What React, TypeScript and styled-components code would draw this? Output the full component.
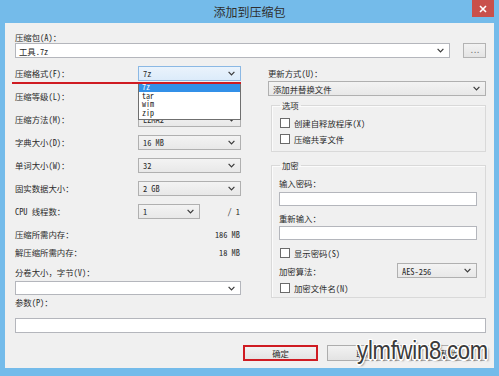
import React from 'react'
import styled, { createGlobalStyle } from 'styled-components'

const GlobalStyle = createGlobalStyle`
  html, body {
    margin: 0;
    padding: 0;
    background: #74bbea;
  }
  body {
    width: 499px;
    height: 376px;
    overflow: hidden;
  }
`

const UI_FONT = `"Noto Sans Mono CJK SC", "Liberation Mono", "Noto Sans CJK SC", monospace`

const Window = styled.div`
  position: relative;
  width: 499px;
  height: 376px;
  box-sizing: border-box;
  padding: 0 5px 8px 5px;
  background: #74bbea;
  display: flex;
  flex-direction: column;
`

const TitleBar = styled.div`
  height: 23px;
  display: grid;
  grid-template-columns: 1fr auto 1fr;
  align-items: start;
`

const Title = styled.div`
  grid-column: 2;
  line-height: 24px;
  font-family: "Noto Sans CJK SC", sans-serif;
  font-size: 12px;
  color: #2f2f2f;
`

const CloseButton = styled.div`
  grid-column: 3;
  justify-self: end;
  width: 22px;
  height: 17px;
  background: #c9504b;
  display: flex;
  align-items: center;
  justify-content: center;
`

const Client = styled.div`
  flex: 1;
  min-width: 0;
  background: #f0f0f0;
  padding: 9px 8px 7px 10px;
  display: flex;
  flex-direction: column;
  font-family: ${UI_FONT};
  font-size: 8.4px;
  color: #2b2b2b;
`

const Label = styled.div<{ $mt?: number }>`
  height: 10px;
  line-height: 10px;
  margin-top: ${(p) => p.$mt ?? 0}px;
  white-space: nowrap;
`

const ArchiveRow = styled.div`
  display: flex;
  gap: 13px;
  height: 15px;
  margin-top: 1px;
`

const Field = styled.div<{ $h?: number; $mt?: number; $grow?: boolean }>`
  position: relative;
  box-sizing: border-box;
  flex: ${(p) => (p.$grow ? '1 1 auto' : 'none')};
  height: ${(p) => p.$h ?? 15}px;
  margin-top: ${(p) => p.$mt ?? 0}px;
  background: #fff;
  border: 1px solid #b4b6bc;
  display: flex;
  align-items: center;
  justify-content: space-between;
  padding: 0 5px 0 3px;
  white-space: nowrap;
`

const Select = styled.div<{ $focused?: boolean; $width?: number }>`
  position: relative;
  box-sizing: border-box;
  flex: none;
  height: 15px;
  ${(p) => (p.$width ? `width: ${p.$width}px;` : '')}
  border: 1px solid ${(p) => (p.$focused ? '#8bb8e4' : '#b0b0b0')};
  background: ${(p) =>
    p.$focused ? 'linear-gradient(#eaf3fc, #dcebfa)' : 'linear-gradient(#f3f3f3, #e8e8e8)'};
  display: flex;
  align-items: center;
  justify-content: space-between;
  padding: 0 5px 0 4px;
  white-space: nowrap;
`

const DotsButton = styled.div`
  box-sizing: border-box;
  width: 23px;
  height: 15px;
  border: 1px solid #b3b3b3;
  background: linear-gradient(#f2f2f2, #e4e4e4);
  color: #777;
  text-align: center;
  line-height: 11px;
  letter-spacing: -1px;
`

const Columns = styled.div`
  display: grid;
  grid-template-columns: 226px 218px;
  column-gap: 27px;
  margin-top: 8px;
  align-items: start;
`

const Column = styled.div`
  display: flex;
  flex-direction: column;
`

const SettingsList = styled.div`
  display: flex;
  flex-direction: column;
  gap: 8px;
`

const SettingRow = styled.div`
  position: relative;
  display: grid;
  grid-template-columns: 123px 1fr auto;
  align-items: center;
  height: 15px;
  line-height: 15px;
`

const Trailing = styled.span`
  padding-right: 1px;
`

const StatRow = styled.div<{ $mt: number }>`
  display: flex;
  justify-content: space-between;
  height: 12px;
  line-height: 12px;
  margin-top: ${(p) => p.$mt}px;
  padding-right: 1px;
`

const Annotation = styled.div`
  position: absolute;
  left: -3px;
  right: 0;
  top: 16px;
  height: 2px;
  background: #cf1b22;
  z-index: 3;
`

const DropList = styled.div`
  position: absolute;
  top: 16px;
  left: -1px;
  right: -1px;
  z-index: 2;
  background: #fff;
  border: 1px solid #6f6f6f;
  border-top: none;
  padding-bottom: 1px;
  display: flex;
  flex-direction: column;
`

const DropItem = styled.div<{ $active?: boolean }>`
  flex: none;
  height: 8.7px;
  line-height: 8.7px;
  font-size: 8px;
  padding-left: 3px;
  background: ${(p) => (p.$active ? '#3390e8' : 'transparent')};
  color: ${(p) => (p.$active ? '#fff' : '#1a1a1a')};
`

const UpdateLabel = styled.div`
  height: 15px;
  line-height: 15px;
`

const GroupBox = styled.fieldset<{ $mt: number; $pt: number; $pb: number }>`
  margin: ${(p) => p.$mt}px 0 0 3px;
  padding: ${(p) => p.$pt}px 8px ${(p) => p.$pb}px 7px;
  border: 1px solid #d9d9d9;
  box-shadow: inset 1px 1px 0 #fbfbfb;
  min-width: 0;
  display: flex;
  flex-direction: column;

  legend {
    padding: 0 2px;
    margin-left: 1px;
    height: 10px;
    line-height: 10px;
  }
`

const CheckRow = styled.div<{ $mt?: number }>`
  display: flex;
  align-items: center;
  gap: 4px;
  height: 12px;
  line-height: 12px;
  margin-top: ${(p) => p.$mt ?? 0}px;
  padding-left: 1px;
`

const CheckBox = styled.span`
  box-sizing: border-box;
  width: 10px;
  height: 10px;
  border: 1px solid #6a6a6a;
  background: #fff;
`

const AlgoRow = styled.div`
  display: flex;
  align-items: center;
  justify-content: space-between;
  height: 15px;
  margin-top: 4px;
`

const ButtonRow = styled.div`
  display: flex;
  justify-content: flex-end;
  gap: 9px;
  margin-top: 12px;
`

const PushButton = styled.div<{ $highlight?: boolean }>`
  box-sizing: border-box;
  width: 75px;
  height: 16px;
  border: ${(p) => (p.$highlight ? '2px solid #cf1b22' : '1px solid #adadad')};
  background: linear-gradient(#f2f2f2, #e3e3e3);
  display: flex;
  align-items: center;
  justify-content: center;
`

const Watermark = styled.div`
  position: absolute;
  right: 11px;
  top: 337px;
  font-family: "Liberation Sans", Arial, sans-serif;
  font-size: 26px;
  line-height: 26px;
  color: #3b3b3b;
  transform: scaleX(0.85);
  transform-origin: right center;
  letter-spacing: -0.3px;
  text-shadow:
    1.5px 0 0 #fff, -1.5px 0 0 #fff, 0 1.5px 0 #fff, 0 -1.5px 0 #fff,
    1px 1px 0 #fff, -1px -1px 0 #fff, 1px -1px 0 #fff, -1px 1px 0 #fff,
    2px 2px 2px rgba(0, 0, 0, 0.35);
`

const Chevron = () => (
  <svg width="7" height="5" viewBox="0 0 7 5">
    <polyline points="0.6,0.8 3.5,3.8 6.4,0.8" fill="none" stroke="#3a3a3a" strokeWidth="1.2" />
  </svg>
)

const CloseGlyph = () => (
  <svg width="8" height="8" viewBox="0 0 8 8">
    <path d="M1 1L7 7M7 1L1 7" stroke="#fff" strokeWidth="1.6" />
  </svg>
)

const settings = [
  { label: '压缩格式(F)：', value: '7z', focused: true },
  { label: '压缩等级(L)：', value: '标准' },
  { label: '压缩方法(M)：', value: 'LZMA2' },
  { label: '字典大小(D)：', value: '16 MB' },
  { label: '单词大小(W)：', value: '32' },
  { label: '固实数据大小：', value: '2 GB' },
]

export default function App() {
  return (
    <>
      <GlobalStyle />
      <Window>
        <TitleBar>
          <Title>添加到压缩包</Title>
          <CloseButton>
            <CloseGlyph />
          </CloseButton>
        </TitleBar>

        <Client>
          <Label>压缩包(A)：</Label>
          <ArchiveRow>
            <Field $grow>
              <span>工具.7z</span>
              <Chevron />
            </Field>
            <DotsButton>...</DotsButton>
          </ArchiveRow>

          <Columns>
            <Column>
              <SettingsList>
                {settings.map((s, i) => (
                  <SettingRow key={s.label}>
                    <span>{s.label}</span>
                    <Select $focused={s.focused}>
                      <span>{s.value}</span>
                      <Chevron />
                      {i === 0 && (
                        <DropList>
                          <DropItem $active>7z</DropItem>
                          <DropItem>tar</DropItem>
                          <DropItem>wim</DropItem>
                          <DropItem>zip</DropItem>
                        </DropList>
                      )}
                    </Select>
                    {i === 0 && <Annotation />}
                  </SettingRow>
                ))}
                <SettingRow>
                  <span>CPU 线程数：</span>
                  <Select $width={62}>
                    <span>1</span>
                    <Chevron />
                  </Select>
                  <Trailing>/ 1</Trailing>
                </SettingRow>
              </SettingsList>

              <StatRow $mt={9}>
                <span>压缩所需内存：</span>
                <span>186 MB</span>
              </StatRow>
              <StatRow $mt={6}>
                <span>解压缩所需内存：</span>
                <span>18 MB</span>
              </StatRow>

              <Label $mt={9}>分卷大小，字节(V)：</Label>
              <Field $h={14} $mt={4}>
                <span />
                <Chevron />
              </Field>
            </Column>

            <Column>
              <UpdateLabel>更新方式(U)：</UpdateLabel>
              <Select>
                <span>添加并替换文件</span>
                <Chevron />
              </Select>

              <GroupBox $mt={4} $pt={7} $pb={6}>
                <legend>选项</legend>
                <CheckRow>
                  <CheckBox />
                  <span>创建自释放程序(X)</span>
                </CheckRow>
                <CheckRow $mt={4}>
                  <CheckBox />
                  <span>压缩共享文件</span>
                </CheckRow>
              </GroupBox>

              <GroupBox $mt={8} $pt={8} $pb={3}>
                <legend>加密</legend>
                <Label>输入密码：</Label>
                <Field $h={14} $mt={4} />
                <Label $mt={7}>重新输入：</Label>
                <Field $h={14} $mt={3} />
                <CheckRow $mt={7}>
                  <CheckBox />
                  <span>显示密码(S)</span>
                </CheckRow>
                <AlgoRow>
                  <span>加密算法：</span>
                  <Select $width={80}>
                    <span>AES-256</span>
                    <Chevron />
                  </Select>
                </AlgoRow>
                <CheckRow $mt={4}>
                  <CheckBox />
                  <span>加密文件名(N)</span>
                </CheckRow>
              </GroupBox>
            </Column>
          </Columns>

          <Label $mt={-1}>参数(P)：</Label>
          <Field $mt={11} />

          <ButtonRow>
            <PushButton $highlight>确定</PushButton>
            <PushButton>取消</PushButton>
            <PushButton>帮助</PushButton>
          </ButtonRow>
        </Client>

        <Watermark>ylmfwin8.com</Watermark>
      </Window>
    </>
  )
}
